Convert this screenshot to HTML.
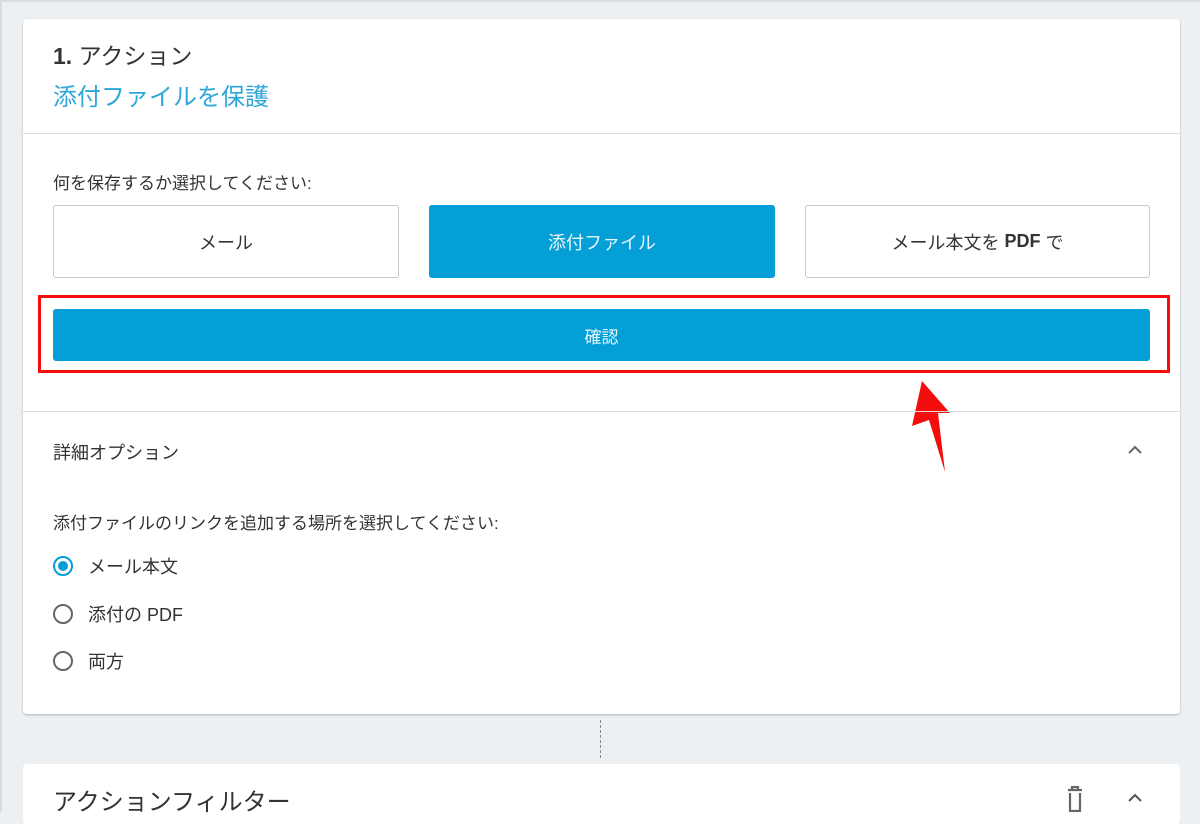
<!DOCTYPE html>
<html><head><meta charset="utf-8"><style>
*{margin:0;padding:0;box-sizing:border-box}
body{width:1200px;height:812px;background:#edf0f3;font-family:"Liberation Sans","Noto Sans CJK JP",sans-serif;color:#333;position:relative;overflow:hidden}
.card{position:absolute;left:23px;top:19px;width:1157px;height:695px;background:#fff;border-radius:4px;box-shadow:0 1px 2px rgba(0,0,0,.25)}
.abs{position:absolute}
.btn{position:absolute;top:205px;height:73px;width:346px;border:1px solid #c8c8c8;border-radius:3px;display:flex;align-items:center;justify-content:center;font-size:18px;color:#333;background:#fff}
.radio{position:absolute;left:53px;width:20px;height:20px;border:2px solid #666;border-radius:50%}
.rl{position:absolute;left:88px;font-size:18px;color:#333}
</style></head><body>
<div class="abs" style="left:0;top:0;width:1200px;height:2px;background:#d8dbdf"></div>
<div class="abs" style="left:0;top:0;width:2px;height:812px;background:#d8dbdf"></div>
<div class="card"></div>
<div class="abs" style="left:53px;top:37px;font-size:23px;color:#333"><b>1.</b> アクション</div>
<div class="abs" style="left:53px;top:77px;font-size:24px;color:#2ea7d8">添付ファイルを保護</div>
<div class="abs" style="left:23px;top:133px;width:1157px;height:1px;background:#ddd"></div>
<div class="abs" style="left:53px;top:169px;font-size:17px">何を保存するか選択してください:</div>
<div class="btn" style="left:53px">メール</div>
<div class="btn" style="left:429px;background:#039fd6;border-color:#039fd6;color:#e8f6fc">添付ファイル</div>
<div class="btn" style="left:805px;width:345px">メール本文を&nbsp;<b>PDF</b>&nbsp;で</div>
<div class="abs" style="left:38px;top:295px;width:1132px;height:78px;border:3px solid #f40d0d"></div>
<div class="abs" style="left:53px;top:309px;width:1097px;height:52px;background:#039fd6;border-radius:3px;color:#e8f6fc;font-size:17px;display:flex;align-items:center;justify-content:center">確認</div>
<svg class="abs" style="left:0;top:0" width="1200" height="812"><path d="M922 381 L950 413 L938 413 L945 472 L929 420 L912 426 Z" fill="#f40d0d"/></svg>
<div class="abs" style="left:23px;top:411px;width:1157px;height:1px;background:#ddd"></div>
<div class="abs" style="left:53px;top:439px;font-size:18px">詳細オプション</div>
<svg class="abs" style="left:1127px;top:444px" width="16" height="12"><path d="M2 9 L8 3 L14 9" stroke="#666" stroke-width="2" fill="none"/></svg>
<div class="abs" style="left:53px;top:509px;font-size:17px">添付ファイルのリンクを追加する場所を選択してください:</div>
<div class="radio" style="top:556px;border-color:#039fd6"><div style="position:absolute;left:3px;top:3px;width:10px;height:10px;border-radius:50%;background:#039fd6"></div></div>
<div class="rl" style="top:553px">メール本文</div>
<div class="radio" style="top:604px"></div>
<div class="rl" style="top:601px">添付の PDF</div>
<div class="radio" style="top:651px"></div>
<div class="rl" style="top:648px">両方</div>
<div class="abs" style="left:600px;top:720px;height:38px;border-left:1px dashed #888"></div>
<div class="abs" style="left:23px;top:764px;width:1157px;height:60px;background:#fff;border-radius:4px"></div>
<div class="abs" style="left:53px;top:782px;font-size:24px;color:#333">アクションフィルター</div>
<svg class="abs" style="left:1065px;top:786px" width="20" height="26"><path d="M3 4 H17 M7 4 V1 H13 V4 M5 7 V25 H15 V7" stroke="#666" stroke-width="2.2" fill="none"/></svg>
<svg class="abs" style="left:1127px;top:792px" width="16" height="12"><path d="M2 9 L8 3 L14 9" stroke="#555" stroke-width="2" fill="none"/></svg>
</body></html>
